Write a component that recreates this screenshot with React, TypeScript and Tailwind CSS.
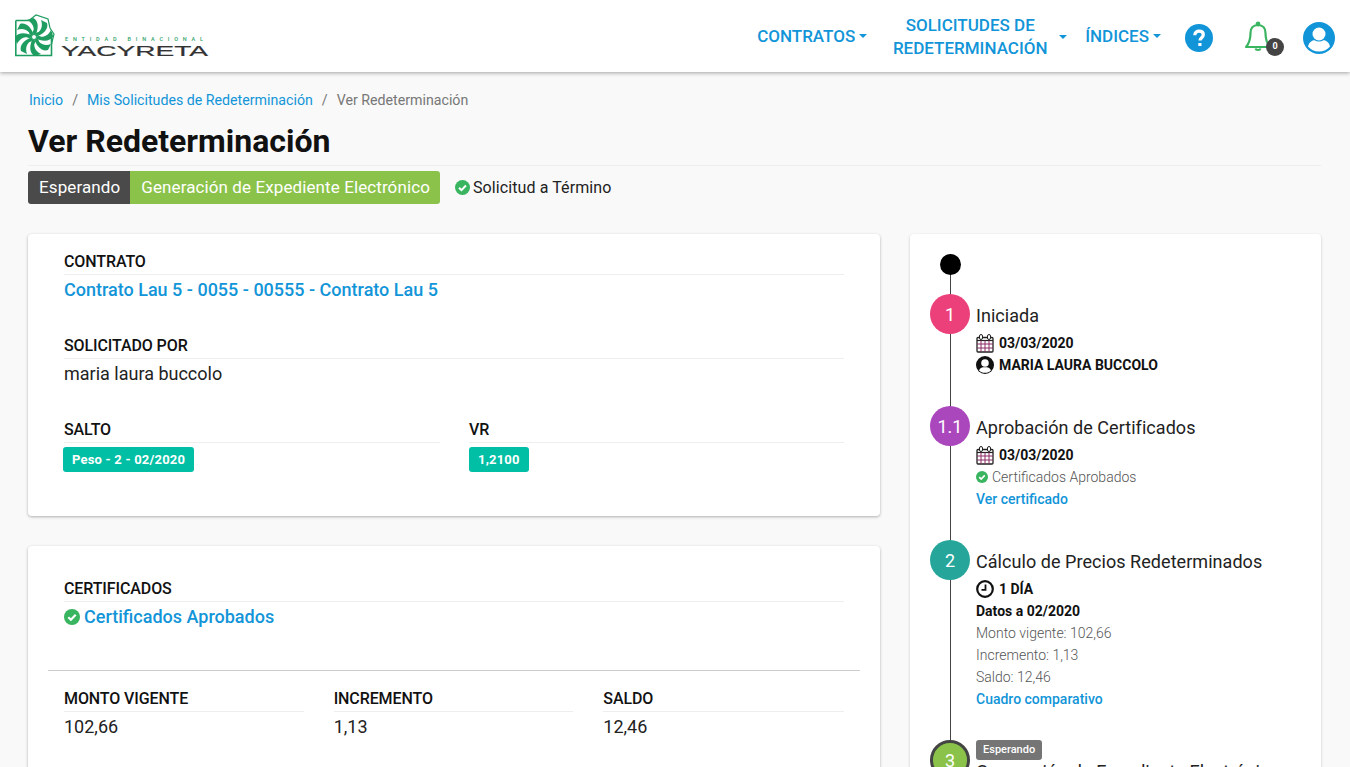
const BLUE = "text-[#1295d8]";

function Logo() {
  const blades = [0, 45, 90, 135, 180, 225, 270, 315];
  return (
    <svg width="196" height="44" viewBox="0 0 196 44" className="block">
      <path d="M0.800 6.500H14M36.500 18V41.500H0.800V6.500" fill="none" stroke="#1f9d61" strokeWidth="1.600" />
      <path d="M14 6.500L21 1L33 5L35 14L39 20L36.500 30" fill="none" stroke="#1f9d61" strokeWidth="1.200" />
      <g transform="translate(19 23)">
        {blades.map((a) => (
          <g key={a} transform={`rotate(${a})`}>
            <path d="M0 -2 C5 -4 10 -9 7 -17 L13 -14 C15 -8 9 -2 1 0 Z" fill="#1f9d61" />
            <path d="M-1 -4 C2 -8 2 -13 -3 -17" fill="none" stroke="#1f9d61" strokeWidth="1.500" />
          </g>
        ))}
        <circle r="2.500" fill="#fff" stroke="#1f9d61" strokeWidth="1" />
      </g>
      <text x="50" y="26.500" fontFamily="Roboto, sans-serif" fontSize="5.500" fontWeight="500" fill="#2fa36b" textLength="138" lengthAdjust="spacing">ENTIDAD BINACIONAL</text>
      <text x="46" y="42" fontFamily="'Liberation Sans', sans-serif" fontSize="15.500" fill="#333" stroke="#333" strokeWidth="0.2" textLength="147" lengthAdjust="spacingAndGlyphs">YACYRETA</text>
    </svg>
  );
}

function Caret() {
  return <span className="ml-1 inline-block w-0 h-0 border-x-[4px] border-x-transparent border-t-[4px] border-t-[#1295d8]" />;
}

function NavItem(props: { children: React.ReactNode }) {
  return (
    <div className={`flex items-center text-[17px] font-medium leading-[23px] ${BLUE}`}>
      {props.children}
    </div>
  );
}

function Header() {
  return (
    <header className="h-[72px] bg-white shadow-[0_1px_4px_rgba(0,0,0,0.35)] flex items-center pl-[15px] pr-[15px] relative z-10">
      <Logo />
      <nav className="ml-auto flex items-center">
        <NavItem>CONTRATOS<Caret /></NavItem>
        <div className="ml-[18px] mr-[18px] mt-[2px]">
          <NavItem>
            <span className="text-center w-[170px]">SOLICITUDES DE REDETERMINACIÓN</span>
            <span className="flex"><Caret /></span>
          </NavItem>
        </div>
        <NavItem>ÍNDICES<Caret /></NavItem>
        <svg width="28" height="28" viewBox="0 0 28 28" className="ml-[24px] mt-[4px]">
          <circle cx="14" cy="14" r="14" fill="#1295d8" />
          <path d="M9.800 11.300c0-2.600 1.900-4.100 4.300-4.100 2.500 0 4.200 1.400 4.200 3.500 0 3-3.300 3-3.300 5.900" fill="none" stroke="#fff" strokeWidth="3.200" />
          <rect x="13.300" y="19" width="3.200" height="3" fill="#fff" />
        </svg>
        <div className="relative ml-[31px] w-[40px] h-[36px] mt-[4px]">
          <svg width="28" height="32" viewBox="0 0 28 32" className="absolute left-0 top-[1px]" fill="none" stroke="#39b45f" strokeWidth="2.200" strokeLinejoin="round">
            <path d="M14 4c-5 0-7.500 3.500-7.500 8 0 6-1 10-4.500 14h24c-3.500-4-4.500-8-4.500-14 0-4.500-2.500-8-7.500-8Z" />
            <circle cx="14" cy="3" r="1.300" />
            <path d="M11.500 27.500c.5 2 4.500 2 5 0" />
          </svg>
          <span className="absolute left-[22px] top-[18px] w-[18px] h-[18px] rounded-full bg-[#444] text-white text-[9px] font-bold flex items-center justify-center">0</span>
        </div>
        <svg width="32" height="32" viewBox="0 0 32 32" className="ml-[19px] mt-[4px]">
          <circle cx="16" cy="16" r="16" fill="#1295d8" />
          <circle cx="16" cy="12" r="6.500" fill="#fff" />
          <path d="M5 24.500c1-4.500 4.500-6.200 6.500-6.200 1.300.8 2.800 1.200 4.500 1.200s3.200-.4 4.500-1.200c2 0 5.500 1.700 6.500 6.200-2.500 3-6.500 5-11 5s-8.500-2-11-5Z" fill="#fff" />
        </svg>
      </nav>
    </header>
  );
}

function Field(props: { label: string; children: React.ReactNode; className?: string }) {
  return (
    <div className={props.className}>
      <div className="text-[16px] font-medium text-[#111] leading-[20px] tracking-[-0.1px] pb-[2px] border-b border-[#eee]">{props.label}</div>
      {props.children}
    </div>
  );
}

function Tag(props: { children: React.ReactNode; className?: string }) {
  return <span className={`inline-block mt-[4px] h-[25px] leading-[25px] px-[9px] rounded-[3px] bg-[#00bfa5] text-white text-[13px] tracking-[0.2px] font-bold ${props.className ?? ""}`}>{props.children}</span>;
}

function Check(props: { size: number }) {
  return (
    <svg width={props.size} height={props.size} viewBox="0 0 16 16" className="inline-block shrink-0">
      <circle cx="8" cy="8" r="8" fill="#39b45f" />
      <path d="M4.300 8.200l2.600 2.600 4.800-5" fill="none" stroke="#fff" strokeWidth="2.200" />
    </svg>
  );
}

function CalendarIcon() {
  return (
    <svg width="18" height="19" viewBox="0 0 18 19" className="shrink-0">
      <rect x="1" y="3.500" width="16" height="14.500" rx="1" fill="#fff" stroke="#222" strokeWidth="1.300" />
      <path d="M1 6.500h16" stroke="#222" strokeWidth="1.200" />
      <path d="M1 10h16M1 14h16M5 6.500V18M9 6.500V18M13 6.500V18" stroke="#8a2a62" strokeWidth="1" />
      <rect x="3.500" y="0.500" width="3" height="5" rx="1.500" fill="#fff" stroke="#222" strokeWidth="1" />
      <rect x="11.500" y="0.500" width="3" height="5" rx="1.500" fill="#fff" stroke="#222" strokeWidth="1" />
    </svg>
  );
}

function UserIcon() {
  return (
    <svg width="18" height="18" viewBox="0 0 18 18" className="shrink-0">
      <circle cx="9" cy="9" r="9" fill="#111" />
      <circle cx="9" cy="7" r="3.800" fill="#fff" />
      <path d="M3 14.500c.8-2.500 3-3.300 4-3.300h4c1 0 3.200.8 4 3.300-1.500 1.500-3.700 2.300-6 2.300s-4.500-.8-6-2.300Z" fill="#fff" />
    </svg>
  );
}

function ClockIcon() {
  return (
    <svg width="18" height="18" viewBox="0 0 18 18" className="shrink-0">
      <circle cx="9" cy="9" r="7.800" fill="#fff" stroke="#111" strokeWidth="2.200" />
      <path d="M9.500 4.500V9.800H5.500" fill="none" stroke="#111" strokeWidth="1.800" />
    </svg>
  );
}

function Step(props: { num: string; color: string; title: string; height: string; children: React.ReactNode }) {
  return (
    <div className={`flex ${props.height}`}>
      <div className={`w-[40px] h-[40px] rounded-full ${props.color} text-white text-[18px] flex items-center justify-center shrink-0 relative z-10`}>{props.num}</div>
      <div className="ml-[6px]">
        <div className="text-[18px] leading-[24px] tracking-[0.05px] text-[#222] mt-[10px] mb-[4px]">{props.title}</div>
        {props.children}
      </div>
    </div>
  );
}

function Line(props: { className?: string; children: React.ReactNode }) {
  return <div className={`flex items-center h-[22px] text-[14px] ${props.className ?? "text-[#555] font-light"}`}>{props.children}</div>;
}

function Timeline() {
  return (
    <aside className="w-[411px] h-[600px] bg-white rounded-[4px] shadow-[0_1px_3px_rgba(0,0,0,0.2)] pt-[20px] pl-[20px] relative overflow-hidden">
      <div className="absolute left-[40px] top-[30px] bottom-0 w-px bg-[#444]" />
      <div className="w-[21px] h-[21px] rounded-full bg-black ml-[10px] relative z-10 mb-[19px]" />
      <Step num="1" color="bg-[#ec407a]" title="Iniciada" height="h-[112px]">
        <Line className="font-bold text-[#111] text-[13px] gap-[5px]"><CalendarIcon />03/03/2020</Line>
        <Line className="font-bold text-[#111] text-[13px] gap-[5px]"><UserIcon />MARIA LAURA BUCCOLO</Line>
      </Step>
      <Step num="1.1" color="bg-[#ab47bc]" title="Aprobación de Certificados" height="h-[134px]">
        <Line className="font-bold text-[#111] text-[13px] gap-[5px]"><CalendarIcon />03/03/2020</Line>
        <Line className="text-[#555] font-light gap-[4px]"><Check size={12} />Certificados Aprobados</Line>
        <Line className={`font-medium ${BLUE}`}>Ver certificado</Line>
      </Step>
      <Step num="2" color="bg-[#26a69a]" title="Cálculo de Precios Redeterminados" height="h-[200px]">
        <Line className="font-bold text-[#111] text-[13px] gap-[5px]"><ClockIcon />1 DÍA</Line>
        <Line className="font-bold text-[#111] text-[13px]">Datos a 02/2020</Line>
        <Line>Monto vigente: 102,66</Line>
        <Line>Incremento: 1,13</Line>
        <Line>Saldo: 12,46</Line>
        <Line className={`font-medium ${BLUE}`}>Cuadro comparativo</Line>
      </Step>
      <div className="flex">
        <div className="w-[40px] h-[40px] rounded-full bg-[#8bc34a] border-[3px] border-[#444] text-white text-[18px] flex items-center justify-center shrink-0 relative z-10">3</div>
        <div className="ml-[6px]">
          <span className="block w-fit h-[20px] leading-[20px] px-[7px] rounded-[3px] bg-[#757575] text-white text-[11px] font-medium">Esperando</span>
          <div className="text-[18px] leading-[24px] tracking-[0.05px] text-[#222]">Generación de Expediente Electrónico</div>
        </div>
      </div>
    </aside>
  );
}

export default function App() {
  return (
    <div className="w-[1350px] h-[767px] overflow-hidden bg-[#f9f9f9] font-['Roboto',sans-serif]">
      <Header />
      <main className="pl-[28px] pr-[29px]">
        <div className="flex items-center gap-[9px] text-[14.2px] h-[20px] mt-[19px] text-[#777] pl-px">
          <span className={BLUE}>Inicio</span>
          <span>/</span>
          <span className={BLUE}>Mis Solicitudes de Redeterminación</span>
          <span>/</span>
          <span>Ver Redeterminación</span>
        </div>
        <h1 className="text-[32px] font-bold text-[#111] leading-[36px] mt-[12px] pb-[6px] border-b border-[#eee]">Ver Redeterminación</h1>
        <div className="flex items-center mt-[5px]">
          <div className="flex h-[33px] rounded-[3px] overflow-hidden text-[17px] tracking-[0.1px] leading-[33px] text-white">
            <span className="bg-[#4a4a4a] pl-[11px] pr-[10px]">Esperando</span>
            <span className="bg-[#8bc34a] pl-[11px] pr-[10px]">Generación de Expediente Electrónico</span>
          </div>
          <span className="ml-[15px] flex items-center gap-[3px] text-[16px] tracking-[0.1px] text-[#222]"><Check size={15} />Solicitud a Término</span>
        </div>
        <div className="flex gap-[30px] mt-[30px] items-start">
          <div className="w-[852px] flex flex-col gap-[30px]">
            <section className="h-[282px] bg-white rounded-[4px] shadow-[0_1px_3px_rgba(0,0,0,0.3)] pt-[18px] px-[36px]">
              <Field label="CONTRATO">
                <div className={`text-[18px] font-medium leading-[30px] ${BLUE}`}>Contrato Lau 5 - 0055 - 00555 - Contrato Lau 5</div>
              </Field>
              <Field label="SOLICITADO POR" className="mt-[31px]">
                <div className="text-[18px] leading-[30px] text-[#222]">maria laura buccolo</div>
              </Field>
              <div className="flex gap-[29px] mt-[31px]">
                <Field label="SALTO" className="w-[376px]"><Tag className="-ml-px">Peso - 2 - 02/2020</Tag></Field>
                <Field label="VR" className="w-[375px]"><Tag>1,2100</Tag></Field>
              </div>
            </section>
            <section className="h-[300px] bg-white rounded-[4px] shadow-[0_1px_3px_rgba(0,0,0,0.3)] pt-[33px]">
              <div className="px-[36px]">
                <Field label="CERTIFICADOS">
                  <div className={`flex items-center gap-[4px] text-[18px] font-medium leading-[30px] ${BLUE}`}><Check size={16} />Certificados Aprobados</div>
                </Field>
              </div>
              <div className="mx-[20px] mt-[38px] border-t border-[#ccc] px-[16px] pt-[18px] flex gap-[30px]">
                <Field label="MONTO VIGENTE" className="w-[240px]"><div className="text-[18px] leading-[30px] text-[#222]">102,66</div></Field>
                <Field label="INCREMENTO" className="w-[240px]"><div className="text-[18px] leading-[30px] text-[#222]">1,13</div></Field>
                <Field label="SALDO" className="w-[241px]"><div className="text-[18px] leading-[30px] text-[#222]">12,46</div></Field>
              </div>
            </section>
          </div>
          <Timeline />
        </div>
      </main>
    </div>
  );
}
